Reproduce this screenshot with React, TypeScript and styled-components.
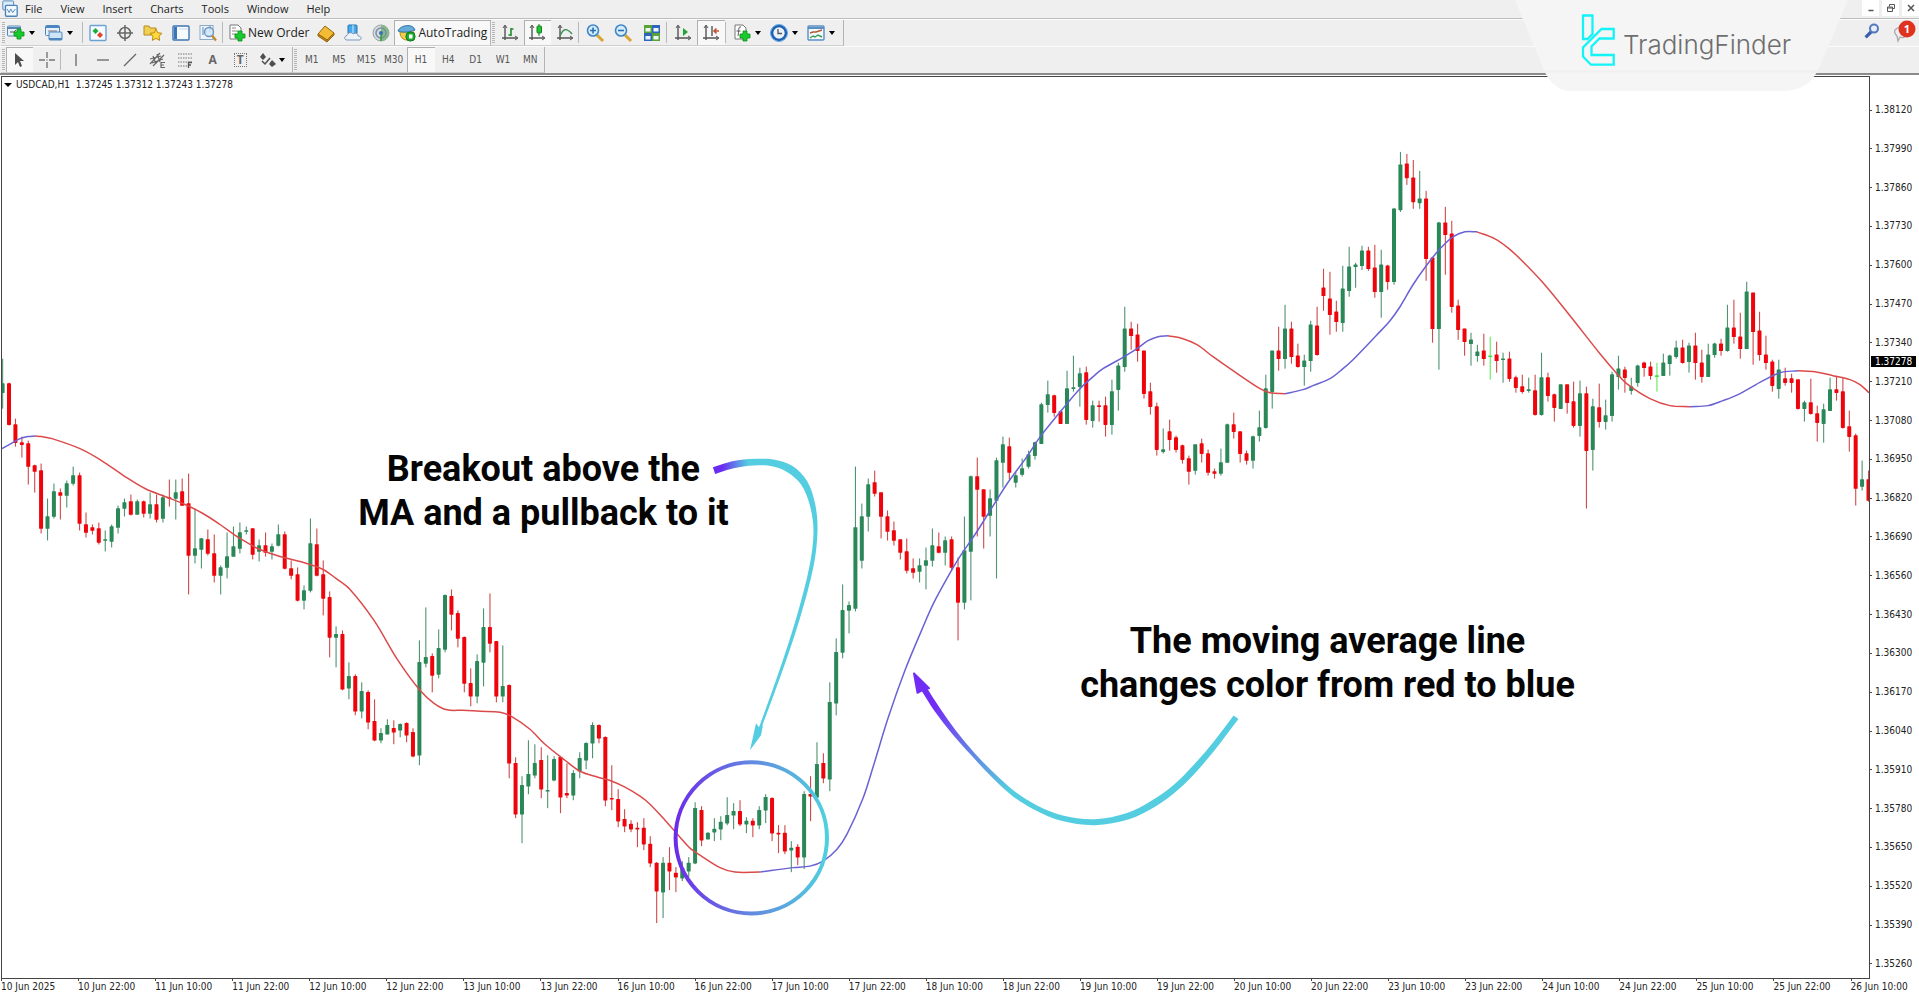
import React from 'react';
import styled, { createGlobalStyle, css } from 'styled-components';

const GlobalStyle = createGlobalStyle`
  * { box-sizing: border-box; }
  html, body { margin: 0; background: #fff; }
  button { font: inherit; color: inherit; background: none; border: 0; padding: 0; margin: 0; }
`;

const UI_FONT = '"Open Sans", "Noto Sans", sans-serif';
const CHART_FONT = '"DejaVu Sans Condensed", "DejaVu Sans", sans-serif';

/* ---------- chart data ---------- */

// One bar per entry: direction (g up, r down, l doji), then high, body top, body bottom and low
const BARS = `
g 357 382 391 407,r 381 382 423 424,r 417 423 441 445,r 435 441 443 456,r 439 442 465 483,r 463 464 470 491,
r 462 469 527 532,g 497 515 527 539,g 482 490 515 517,r 487 491 494 518,g 479 482 494 506,g 465 474 482 484,
r 471 474 522 529,r 511 523 531 536,r 523 526 529 533,r 521 527 541 543,g 529 538 539 550,g 523 525 540 546,
g 504 507 526 532,g 497 501 507 515,r 493 500 513 514,g 498 500 513 513,r 499 500 512 516,g 491 503 512 517,
r 493 503 518 521,g 493 496 517 521,r 478 496 497 505,g 478 491 497 518,r 477 490 504 504,r 472 502 554 593,
g 507 547 554 562,g 537 537 548 567,r 528 538 552 554,r 533 552 574 581,g 564 566 574 593,g 531 555 566 577,
g 525 545 555 555,g 521 531 547 552,g 525 529 530 533,r 527 527 553 558,g 538 544 550 560,r 531 544 551 555,
g 542 545 550 558,g 523 533 544 545,r 530 533 567 568,r 559 567 574 578,r 566 573 599 600,g 584 589 599 608,
g 517 542 589 591,r 527 543 574 575,r 559 573 597 614,r 590 596 636 656,g 625 633 636 666,r 629 633 688 689,
g 661 675 687 698,r 673 675 710 714,g 681 690 710 717,r 689 691 721 728,r 698 720 739 740,g 727 732 739 742,
g 718 724 733 733,r 719 727 731 743,g 722 723 729 736,r 721 722 734 741,r 727 731 755 756,g 639 661 754 764,
g 606 656 662 666,r 652 655 674 691,g 628 647 673 677,g 593 594 648 651,r 588 595 613 629,r 609 612 637 646,
r 635 636 682 691,r 667 682 695 705,g 653 660 695 702,g 607 626 661 685,r 592 626 642 651,r 640 640 695 701,
g 644 685 695 701,r 683 684 762 777,r 756 762 813 817,g 775 784 813 842,g 739 773 785 793,g 743 762 774 777,
r 746 759 788 797,g 754 789 790 807,g 755 758 779 780,r 755 756 796 812,r 762 792 794 797,g 769 772 794 799,
g 751 757 770 777,g 741 742 759 768,g 721 724 742 757,r 723 724 737 742,r 735 736 799 805,r 764 797 798 809,
r 788 798 820 826,r 808 818 825 831,r 819 823 828 831,r 821 827 828 846,r 817 827 843 849,r 835 843 862 866,
r 861 862 890 922,g 856 862 891 917,r 846 862 870 889,r 866 872 876 891,g 860 867 877 880,g 856 862 870 876,
g 801 807 862 863,r 805 809 839 845,g 831 832 838 838,g 817 828 831 840,g 815 821 828 839,g 796 814 822 824,
g 802 810 814 828,r 799 810 823 825,g 816 820 823 832,r 817 820 824 836,g 805 809 824 828,g 793 796 809 822,
r 796 797 832 840,r 824 832 833 852,r 824 832 850 853,g 840 847 849 871,r 843 846 856 864,g 790 793 856 868,
r 775 793 795 820,g 741 763 796 797,r 752 762 777 782,g 681 701 778 790,g 637 651 702 714,g 583 609 651 657,
g 600 604 609 632,g 465 526 607 610,g 502 515 559 567,g 477 483 515 530,r 469 481 492 495,r 491 491 515 537,
r 509 515 530 539,r 520 529 539 544,r 538 538 551 558,r 537 550 569 572,r 557 567 571 577,g 557 564 570 581,
g 546 559 564 588,g 527 544 559 565,r 531 545 551 552,g 535 539 551 564,r 535 538 566 569,r 556 566 601 639,
g 515 549 601 608,g 474 475 550 599,r 456 475 488 535,r 488 488 515 547,g 488 497 514 535,g 456 459 499 577,
g 435 443 461 486,r 436 445 471 478,g 470 474 481 486,g 457 467 473 475,g 449 453 465 467,g 440 441 454 458,
g 401 403 442 442,g 379 393 403 411,r 393 394 411 415,r 409 410 422 422,g 369 387 422 422,g 354 386 387 390,
g 366 372 385 405,r 365 371 418 423,g 399 404 419 426,r 399 404 405 420,r 395 404 423 435,g 378 390 423 433,
g 361 364 388 409,g 305 327 365 370,r 320 327 334 348,r 322 333 349 360,r 349 349 392 397,r 381 390 405 413,
r 401 405 448 454,g 427 448 450 452,r 418 430 438 449,r 434 436 448 451,r 443 444 458 462,r 454 457 470 483,
g 443 443 469 473,r 437 442 452 461,r 448 452 471 474,r 467 470 472 477,g 447 461 472 474,g 422 423 461 461,
r 411 423 430 437,r 430 430 452 461,r 449 452 459 463,g 434 435 459 467,g 409 426 434 440,g 373 387 426 427,
g 349 349 390 407,r 325 349 357 369,g 303 327 357 367,r 320 327 355 362,r 342 354 365 366,g 353 359 365 384,
g 319 323 359 370,r 305 324 353 354,r 267 286 294 309,r 270 297 313 333,r 299 310 320 330,g 264 287 321 330,
g 245 265 289 295,g 261 263 265 286,g 244 249 264 268,r 245 249 267 269,r 243 266 290 296,g 248 263 290 316,
r 263 264 280 288,g 206 207 280 283,g 150 163 208 210,r 152 162 176 183,r 158 176 200 207,g 169 197 201 207,
r 189 197 257 279,r 255 256 327 341,g 220 221 327 368,r 205 221 233 273,r 219 232 305 311,r 298 304 328 338,
r 327 327 340 354,g 331 338 342 364,g 343 350 354 360,r 332 349 357 364,l 335 354 355 378,r 340 353 359 371,
g 351 357 358 381,r 350 357 377 380,r 374 376 386 391,r 373 385 390 392,g 376 388 389 391,r 373 389 413 414,
g 351 376 413 414,r 371 376 394 400,r 392 393 406 420,g 383 383 407 407,r 383 383 401 412,r 380 400 424 426,
g 379 392 424 435,r 385 392 449 507,g 397 405 448 469,r 382 406 420 426,g 398 414 420 428,g 370 373 414 420,
g 354 367 375 388,r 365 368 376 391,g 376 385 389 393,g 363 364 381 385,r 360 361 366 375,r 360 365 374 378,
l 361 374 375 390,g 352 361 374 374,g 353 354 362 374,g 339 346 355 357,r 338 346 361 362,g 341 344 360 371,
r 331 344 361 378,r 348 361 375 381,g 342 353 375 375,g 341 342 353 356,r 337 342 349 354,g 303 326 349 350,
r 298 326 335 342,r 311 335 347 357,g 280 290 347 347,r 291 291 330 363,r 310 329 353 359,r 334 353 361 368,
r 358 360 384 390,g 358 368 387 397,r 366 377 381 384,r 372 377 381 391,r 378 378 407 408,g 399 401 407 420,
r 377 401 412 413,r 404 412 421 440,g 402 408 422 441,g 376 388 409 409,r 374 388 391 399,r 376 390 426 427,
r 409 425 435 450,r 432 434 487 504,g 459 478 485 489,r 469 478 499 500`
  .trim()
  .split(/,\s*/)
  .map((row) => {
    const [kind, ...values] = row.split(' ');
    const [high, top, bottom, low] = values.map(Number);
    return { kind, high, top, bottom, low };
  });

const BAR_COLORS: Record<string, string> = { g: '#2a8757', r: '#ee050b', l: '#3fe03f' };
const WICK_COLORS: Record<string, string> = { g: '#4f9470', r: '#cf4a4a', l: '#5fe85f' };
const FIRST_BAR = 2.6;
const BAR_STEP = 6.412;

type Point = [number, number];

const AVERAGE: { trend: 'up' | 'down'; points: Point[] }[] = [
  { trend: 'up', points: [[2, 447], [11, 442], [20, 437], [28, 435], [35, 434.5]] },
  { trend: 'down', points: [[35, 434.5], [42, 435], [52, 437], [80, 447], [100, 458], [125, 475], [145, 487], [165, 495], [185, 503], [203, 512], [220, 523], [240, 537], [260, 548], [280, 555], [300, 560], [323, 568], [336, 577], [350, 588], [374, 619], [398, 659], [420, 689], [434, 702], [447, 708.5], [463, 709], [480, 710], [500, 711], [513, 716], [530, 728], [545, 743], [565, 759], [580, 770], [598, 776], [612, 780], [625, 786], [640, 795], [650, 803], [665, 819], [680, 836], [690, 847], [700, 854], [720, 866.5], [735, 871], [760, 871]] },
  { trend: 'up', points: [[760, 871], [793, 866.5], [810, 865], [823, 860], [837, 848], [847, 833], [863, 797], [873, 766], [888, 717], [905, 669], [922, 628], [933, 603], [947, 577], [960, 555], [977, 530], [997, 498], [1010, 478], [1027, 455], [1041, 434], [1067, 402], [1080, 387], [1092, 376], [1103, 367], [1120, 357.5], [1137, 347], [1148, 339], [1158, 335], [1168, 334]] },
  { trend: 'down', points: [[1168, 334], [1183, 337], [1197, 343], [1213, 355], [1233, 369], [1260, 387], [1270, 391], [1285, 392]] },
  { trend: 'up', points: [[1285, 392], [1303, 388], [1313, 384], [1330, 377], [1343, 367], [1353, 358], [1377, 333], [1390, 319], [1400, 305], [1413, 283], [1427, 263], [1440, 247], [1453, 235], [1465, 230], [1477, 230]] },
  { trend: 'down', points: [[1477, 230], [1495, 237], [1508, 246], [1520, 257], [1543, 281], [1570, 314], [1600, 352], [1617, 372], [1628, 383], [1650, 397], [1670, 404], [1690, 405]] },
  { trend: 'up', points: [[1690, 405], [1708, 404], [1723, 399], [1738, 393], [1763, 379], [1780, 371], [1798, 369]] },
  { trend: 'down', points: [[1798, 369], [1815, 370], [1833, 374], [1850, 378], [1860, 383], [1869, 391]] },
];

const PRICES = Array.from({ length: 23 }, (_, i) => (1.3812 - i * 0.0013).toFixed(5));
const DAYS = [10, 11, 12, 13, 16, 17, 18, 19, 20, 23, 24, 25];
const DATES = [
  '10 Jun 2025',
  '10 Jun 22:00',
  ...DAYS.slice(1).flatMap((d) => [`${d} Jun 10:00`, `${d} Jun 22:00`]),
  '26 Jun 10:00',
];

/* ---------- curve helpers ---------- */

const distance = (a: Point, b: Point) => Math.hypot(b[0] - a[0], b[1] - a[1]);

// Spline through the points, with tangents weighted by the distance between neighbours
function smoothPath(points: Point[]) {
  const tangents = points.map((_, i): Point => {
    const a = points[Math.max(i - 1, 0)];
    const c = points[Math.min(i + 1, points.length - 1)];
    const span = distance(a, points[i]) + distance(points[i], c) || 1;
    return [(c[0] - a[0]) / span, (c[1] - a[1]) / span];
  });
  let d = `M${points[0][0]} ${points[0][1]}`;
  for (let i = 0; i < points.length - 1; i++) {
    const b = points[i];
    const c = points[i + 1];
    const k = distance(b, c) / 3;
    const [t, u] = [tangents[i], tangents[i + 1]];
    d += `C${b[0] + t[0] * k} ${b[1] + t[1] * k} ${c[0] - u[0] * k} ${c[1] - u[1] * k} ${c[0]} ${c[1]}`;
  }
  return d;
}

// Outline of a brush stroke whose width changes along the way; each knot is x, y, width
function brushPath(knots: [number, number, number][]) {
  const left: Point[] = [];
  const right: Point[] = [];
  knots.forEach(([x, y, w], i) => {
    const [px, py] = knots[Math.max(i - 1, 0)];
    const [nx, ny] = knots[Math.min(i + 1, knots.length - 1)];
    const len = Math.hypot(nx - px, ny - py);
    const ox = (-(ny - py) / len) * (w / 2);
    const oy = ((nx - px) / len) * (w / 2);
    left.push([x + ox, y + oy]);
    right.unshift([x - ox, y - oy]);
  });
  return `${smoothPath(left)}${smoothPath(right).replace('M', 'L')}Z`;
}

const CALLOUT_ARROW = brushPath([[714, 469, 7], [726, 465, 7], [740, 462, 7], [758, 460.5, 6.5], [774, 461.5, 7], [790, 467.5, 8], [804, 481, 7], [812.5, 503, 5.5], [815.5, 530, 4], [811.5, 565, 4], [798, 617, 3.6], [780, 672, 3], [760, 727, 2.4]]);
const SWEEP_ARROW = brushPath([[923, 686, 6], [937, 708, 6], [954, 731, 5], [973, 753, 4], [993, 774, 4.5], [1013, 792, 5], [1035, 806, 5], [1062, 817, 5.5], [1095, 821, 6], [1128, 815, 6.5], [1154, 802, 7], [1176, 786, 6.5], [1196, 766, 6.5], [1217, 741, 6], [1236, 716, 6]]);

/* ---------- layout ---------- */

const Window = styled.div`
  position: relative;
  display: flex;
  flex-direction: column;
  min-height: 100vh;
  overflow: hidden;
  background: #efefef;
  font-family: ${UI_FONT};
  font-size: 12px;
  color: #222;
`;

const MenuBar = styled.header`
  display: flex;
  align-items: flex-start;
  justify-content: space-between;
  height: 19px;
  padding-left: 1px;
  border-bottom: 1px solid #bdbdbd;
`;

const Menu = styled.nav`
  display: flex;
  align-items: center;
  gap: 18px;
  font-size: 11px;
  line-height: 16px;
  svg { margin-right: -12px; }
`;

const Controls = styled.div`
  display: flex;
  gap: 3px;
`;

const ControlButton = styled.button`
  display: grid;
  place-items: center;
  width: 17px;
  height: 16px;
  background: #fff;
`;

const Toolbar = styled.div`
  display: flex;
  align-items: stretch;
  height: 27px;
  padding-left: 1px;
  border-top: 1px solid #fbfbfb;
`;

const Strip = styled.div`
  display: flex;
  align-items: stretch;
  border-right: 1px solid #b4b4b4;
  border-bottom: 1px solid #cfcfcf;
`;

const Group = styled.div<{ $width: number; $count: number; $lead?: number }>`
  display: grid;
  grid-template-columns: repeat(${(p) => p.$count}, 1fr);
  width: ${(p) => p.$width}px;
  padding-left: ${(p) => p.$lead ?? 0}px;
`;

const Grip = styled.span`
  width: 3px;
  margin: 2px 1px;
  background: repeating-linear-gradient(#b5b5b5 0 1px, #efefef 1px 2px);
`;

const Divider = styled.span`
  width: 1px;
  margin: 2px 1px 2px 0;
  background: #b9b9b9;
`;

const pressed = css`
  background: #f8f8f8;
  box-shadow: inset 1px 1px 0 #b0b0b0;
`;

const ToolButton = styled.button<{ $on?: boolean }>`
  display: flex;
  align-items: center;
  justify-content: center;
  ${(p) => p.$on && pressed}
`;

const DropButton = styled.button`
  display: flex;
  align-items: center;
  gap: 3px;
  &::after {
    content: '';
    border: 3px solid transparent;
    border-top: 4px solid #000;
    border-bottom: 0;
  }
`;

const TextButton = styled.button<{ $on?: boolean }>`
  display: flex;
  align-items: center;
  gap: 1px;
  padding: 0 3px;
  white-space: nowrap;
  ${(p) => p.$on && pressed}
`;

const PeriodButton = styled(ToolButton)`
  font-family: ${CHART_FONT};
  font-size: 10px;
  color: #555;
`;

const StatusIcons = styled.div`
  display: flex;
  align-items: center;
  gap: 12px;
  margin-left: auto;
  padding-right: 3px;
`;

const BrandTab = styled.div`
  position: absolute;
  top: 0;
  right: 71px;
  width: 333px;
  height: 91px;
  z-index: 2;
`;

const BrandShape = styled.svg`
  display: block;
`;

const BrandName = styled.span`
  position: absolute;
  left: 108px;
  top: 30px;
  font: 300 26px/30px Inter, sans-serif;
  color: #6e6e6e;
`;

const Chart = styled.main`
  position: relative;
  flex: 1;
  display: grid;
  grid-template-columns: 1fr 49px;
  grid-template-rows: 1fr 17px;
  min-height: 480px;
  border-top: 2px solid #8b8b8b;
  padding: 1px 0 0 1px;
  background: #fff;
  font-family: ${CHART_FONT};
  font-size: 10px;
  line-height: 12px;
  color: #222;
`;

const Plot = styled.section`
  position: relative;
  border: 1px solid #444;
`;

const PlotArea = styled.svg`
  position: absolute;
  inset: 0;
  width: 100%;
  height: 100%;
`;

const Quote = styled.div`
  position: relative;
  display: flex;
  align-items: center;
  gap: 4px;
  padding: 2px 0 0 2px;
  white-space: pre;
  &::before {
    content: '';
    border: 4px solid transparent;
    border-top: 4px solid #000;
    border-bottom: 0;
  }
`;

const Note = styled.p<{ $x: string; $y: string }>`
  position: absolute;
  left: ${(p) => p.$x};
  top: ${(p) => p.$y};
  transform: translate(-50%, -50%);
  margin: 0;
  font: 700 36px/44px Roboto, sans-serif;
  color: #050505;
  text-align: center;
  white-space: nowrap;
`;

const PriceAxis = styled.aside`
  position: relative;
  display: flex;
  flex-direction: column;
  justify-content: space-between;
  padding: 28px 0 9px;
`;

const Price = styled.span`
  display: flex;
  align-items: center;
  gap: 3px;
  &::before {
    content: '';
    width: 2px;
    height: 1px;
    background: #444;
  }
`;

const LastPrice = styled.strong`
  position: absolute;
  left: 1px;
  top: 31%;
  width: 45px;
  padding-left: 4px;
  line-height: 11px;
  font-weight: 400;
  background: #000;
  color: #fff;
`;

const DateAxis = styled.footer`
  display: flex;
`;

const DateLabel = styled.span`
  flex: 0 0 calc(100% * 12 / 291);
  white-space: nowrap;
  &::before {
    content: '';
    display: block;
    width: 1px;
    height: 2px;
    background: #444;
  }
`;

/* ---------- icons ---------- */

const Icon = ({ children, size = 20 }: { children: React.ReactNode; size?: number }) => (
  <svg width={size} height={size} viewBox="0 0 20 20" fill="none" aria-hidden="true">
    {children}
  </svg>
);

const Plus = ({ x, y }: { x: number; y: number }) => (
  <path transform={`translate(${x} ${y})`} d="M3 0h4v3h3v4H7v3H3V7H0V3h3z" fill="#16cc2c" stroke="#0c8a18" strokeWidth=".8" />
);

const Axes = () => (
  <g stroke="#555" strokeWidth="1.4">
    <path d="M5 3v14M2 15h15" />
    <path d="M3 5l2-3 2 3M15 13l3 2-3 2" strokeWidth="1" />
  </g>
);

const icons = {
  app: <g stroke="#4b82b8"><rect x="2" y="1" width="12" height="10" rx="1" fill="#dcebf8" /><rect x="5" y="6" width="13" height="12" rx="1" fill="#f2f8ff" strokeWidth="1.5" /><path d="M7 10l2 4 2-4 2 4 3-4" /></g>,
  newChart: <g><rect x="1.500" y="3" width="13" height="10" rx="1" fill="#e6f1fb" stroke="#5588b5" /><path d="M2 5h12" stroke="#5588b5" strokeWidth="2" /><path d="M4 9h4l2-2" stroke="#555" /><Plus x={8} y={6} /></g>,
  profiles: <g stroke="#4c86c0"><rect x="1.500" y="2.500" width="14" height="10" rx="1" fill="#e6f1fb" /><path d="M2 4h13" strokeWidth="2" /><rect x="5" y="9" width="13" height="8" rx="1" fill="#cfe3f6" /><path d="M5 16h13" strokeWidth="2" /><path d="M4 8h9" stroke="#777" /></g>,
  market: <g><rect x="2" y="2.500" width="16" height="15" rx="1" fill="#f6fbff" stroke="#6ba2d4" strokeWidth="1.4" /><path d="M7.500 5l3 3-3 3-3-3z" fill="#1bad35" /><path d="M12 9l3 3-3 3-3-3z" fill="#e2432d" /></g>,
  dataWindow: <g stroke="#666" strokeWidth="1.500"><circle cx="10" cy="10" r="5.500" /><path d="M10 2v16M2 10h16" /></g>,
  favorites: <g><path d="M1 3h5l1 2h6v7H1z" fill="#f0cf52" stroke="#b58b1c" /><path d="M13 6l1.800 3.800 4.200.500-3 2.900.700 4.200-3.700-2-3.700 2 .700-4.200-3-2.900 4.200-.500z" fill="#ffd93b" stroke="#bf8a12" /></g>,
  navigator: <g><rect x="2" y="3" width="16" height="14" rx="1" fill="#f7fbff" stroke="#3d76b4" strokeWidth="1.400" /><rect x="3" y="4" width="3" height="12" fill="#3d76b4" /><path d="M8 6h9" stroke="#c5daee" /></g>,
  tester: <g><rect x="2" y="2.500" width="13" height="14" fill="#eef5fc" stroke="#89a9c9" /><path d="M5 4v8M8 5v5M12 3v6" stroke="#5b86b4" /><circle cx="11" cy="9" r="4.500" fill="#cfe6fa" fillOpacity=".8" stroke="#6b93bd" strokeWidth="1.300" /><path d="M14 12.500l4 5" stroke="#c08a2e" strokeWidth="2.400" /></g>,
  order: <g><path d="M3 2h8l3 3v11H3z" fill="#fff" stroke="#777" /><path d="M5 5h4M5 8h6M5 11h4" stroke="#888" /><Plus x={8} y={8} /></g>,
  gold: <g stroke="#94660f"><path d="M2 11l7-8 9 7-7 7z" fill="#f3bb36" /><path d="M2 11v2l9 6v-2zM11 17l7-7v2l-7 7" fill="#c98a1a" /></g>,
  cloud: <g><rect x="5" y="2" width="9" height="9" rx="1" fill="#45a8e8" stroke="#2473b4" /><path d="M10 2v9" stroke="#d7eefc" /><path d="M4 17c-3 0-3-4 0-4.500C5 9 9 9 10 11c3-2 5 0 5 2 4 0 4 4 1 4z" fill="#eef3f9" stroke="#7c97b5" /></g>,
  signal: <g><circle cx="10" cy="10" r="8" fill="#d5dadd" stroke="#9aa3a8" /><path d="M10 2a8 8 0 010 16z" fill="#82bb85" /><circle cx="10" cy="10" r="5" stroke="#7c8fa8" strokeWidth="1.500" /><circle cx="10" cy="10" r="2" fill="#3b6cb4" /><path d="M10 12v6" stroke="#2f9a3a" strokeWidth="1.500" /></g>,
  auto: <g><path d="M3 9c0 5 3 8 7 8s7-3 7-8z" fill="#f1cf4a" stroke="#b08a1c" /><path d="M1 8c2-6 15-8 17-1-5 2-11 3-17 1z" fill="#64acd9" stroke="#3476a6" /><rect x="9" y="9" width="9" height="9" rx="4" fill="#20a82f" stroke="#117a1c" /><path d="M12 11.500h3.500v4H12z" fill="#fff" /></g>,
  barChart: <g><Axes /><path d="M11 5v8M11 6h2.500M8.500 12H11" stroke="#1f8f2d" strokeWidth="1.600" /></g>,
  candleChart: <g><Axes /><path d="M12 1v12" stroke="#15801f" /><rect x="10" y="3" width="4.500" height="7" rx="1" fill="#1fc52f" stroke="#15801f" /></g>,
  lineChart: <g><Axes /><path d="M5 13c3-7 6-9 12-2" stroke="#3a8d55" strokeWidth="1.400" /></g>,
  zoomIn: <g><path d="M12 12l6 6" stroke="#d9a52e" strokeWidth="3" /><circle cx="8" cy="7.500" r="5.500" fill="#d6ecfb" stroke="#3f86c8" strokeWidth="1.600" /><path d="M5 7.500h6M8 4.500v6" stroke="#2b6fb3" strokeWidth="1.600" /></g>,
  zoomOut: <g><path d="M12 12l6 6" stroke="#d9a52e" strokeWidth="3" /><circle cx="8" cy="7.500" r="5.500" fill="#d6ecfb" stroke="#3f86c8" strokeWidth="1.600" /><path d="M5 7.500h6" stroke="#2b6fb3" strokeWidth="1.600" /></g>,
  tile: <g><rect x="2" y="2" width="8" height="8" fill="#57a436" /><rect x="10" y="2" width="8" height="8" fill="#2e63bd" /><rect x="2" y="10" width="8" height="8" fill="#2e63bd" /><rect x="10" y="10" width="8" height="8" fill="#57a436" /><path d="M3.500 5h5v3.500h-5zM11.500 5h5v3.500h-5zM3.500 13h5v3.500h-5zM11.500 13h5v3.500h-5z" fill="#edf5fb" /></g>,
  scroll: <g><Axes /><path d="M10 5l5 4-5 4z" fill="#22a534" /></g>,
  shift: <g><Axes /><path d="M11 3v10" stroke="#555" strokeWidth="1.400" /><path d="M18 8h-5M15.500 5.500L13 8l2.500 2.500" stroke="#c4522d" strokeWidth="1.600" /></g>,
  indicator: <g><path d="M3 2h8l3 3v11H3z" fill="#fff" stroke="#777" /><path d="M9 4c-3-1-2 4-3 9M4.500 8h4" stroke="#555" /><Plus x={8} y={8} /></g>,
  clock: <g><circle cx="10" cy="10" r="7" fill="#e9f3fc" stroke="#1d5fb0" strokeWidth="2.600" /><circle cx="10" cy="10" r="8.500" stroke="#5ca4e6" /><path d="M9 6v4.500h4" stroke="#555" strokeWidth="1.300" /></g>,
  template: <g><rect x="2" y="3" width="16" height="14" rx="1" fill="#f2f8fe" stroke="#5a8fc4" strokeWidth="1.400" /><path d="M2 5h16" stroke="#5a8fc4" strokeWidth="2" /><path d="M4 10l3-1 3 0 6-2" stroke="#b05a32" strokeWidth="1.400" /><path d="M4 15l3-2 2 1 3-2 4 2" stroke="#3d9b4c" strokeWidth="1.400" /></g>,
  cursor: <path d="M5 3v12l3-3 2 5 2-1-2-5h4z" fill="#4d4d4d" />,
  cross: <path d="M10 2v6M10 12v6M2 10h6M12 10h6M10 9.500v1" stroke="#777" strokeWidth="1.400" />,
  vertical: <path d="M10 4v12" stroke="#666" strokeWidth="1.300" />,
  horizontal: <path d="M4 10h12" stroke="#666" strokeWidth="1.300" />,
  trend: <path d="M4 16L16 4" stroke="#666" strokeWidth="1.300" />,
  channel: <g stroke="#666" strokeWidth="1.200"><path d="M2 14L12 3M5 16L16 5M2 9l11-3M4 13l11-4M5 6l3 8M9 4l3 8" /><path d="M17 12.500h-4v5h4M13 15h3" /></g>,
  fibo: <g stroke="#777"><path d="M3 4h14M3 8h14M3 12h14M3 16h9" strokeDasharray="1.500 1" /><path d="M17 12.500h-3.500V18M13.500 15H16" stroke="#555" strokeWidth="1.300" /></g>,
  arrows: <g fill="#4d4d4d"><path d="M4 7l3-4 3 4-3 3zM13 14l3-4 4 4-4 3z" /><path d="M6 11l3 3 5-6" stroke="#4d4d4d" strokeWidth="1.500" fill="none" /></g>,
};

const groupA = [['Market Watch', icons.market], ['Data Window', icons.dataWindow], ['Favorites', icons.favorites], ['Navigator', icons.navigator], ['Strategy Tester', icons.tester]] as const;
const groupB = [['MetaEditor', icons.gold], ['Virtual Hosting', icons.cloud], ['Signals', icons.signal]] as const;
const chartTypes = [['Bar Chart', icons.barChart], ['Candlesticks', icons.candleChart], ['Line Chart', icons.lineChart]] as const;
const viewTools = [['Zoom In', icons.zoomIn], ['Zoom Out', icons.zoomOut], ['Tile Windows', icons.tile]] as const;
const scrollTools = [['Auto Scroll', icons.scroll], ['Chart Shift', icons.shift]] as const;
const chartMenus = [['Indicators', icons.indicator], ['Periods', icons.clock], ['Templates', icons.template]] as const;
const pointers = [['Cursor', icons.cursor], ['Crosshair', icons.cross]] as const;
const lineTools = [['Vertical Line', icons.vertical], ['Horizontal Line', icons.horizontal], ['Trendline', icons.trend], ['Equidistant Channel', icons.channel], ['Fibonacci Retracement', icons.fibo]] as const;

type ToolList = readonly (readonly [string, React.ReactElement])[];

const Tools = ({ items, width, active }: { items: ToolList; width: number; active?: string }) => (
  <Group $width={width} $count={items.length}>
    {items.map(([name, icon]) => (
      <ToolButton key={name} aria-label={name} $on={name === active}>
        <Icon>{icon}</Icon>
      </ToolButton>
    ))}
  </Group>
);

const GlyphTool = styled(ToolButton)<{ $boxed?: boolean }>`
  font: 700 12px/12px ${UI_FONT};
  color: #666;
  span {
    padding: 0 2px;
    ${(p) => p.$boxed && 'border: 1px dotted #777;'}
  }
`;

/* ---------- sections ---------- */

const Brand = () => (
  <BrandTab>
    <BrandShape width="333" height="91" viewBox="0 0 333 91" aria-hidden="true">
      <path d="M0 0H333L304 68Q294 91 268 91H55Q37 90 28 68Z" fill="#f5f5f5" />
      <path d="M28 71.500H303" stroke="#f0f0f0" strokeWidth="2" />
      <g fill="none" stroke="#14f4f7" strokeWidth="2.300">
        <path d="M68 15.500H77.500V34L72.500 39H68Z" />
        <path d="M98.700 29H86.500L68 47.500V56.500L76 64.700H98.700V55H76.500V46.500L84.500 38.500H98.700Z" />
      </g>
    </BrandShape>
    <BrandName>TradingFinder</BrandName>
  </BrandTab>
);

const Candles = () => (
  <g>
    {BARS.map((bar, i) => {
      const x = FIRST_BAR + i * BAR_STEP;
      return (
        <g key={i}>
          <rect x={x - 0.5} y={bar.high} width="1.1" height={bar.low - bar.high} fill={WICK_COLORS[bar.kind]} />
          <rect x={x - 2} y={bar.top - 0.3} width="4" height={Math.max(bar.bottom - bar.top + 0.6, 1.5)} rx=".6" fill={BAR_COLORS[bar.kind]} />
        </g>
      );
    })}
  </g>
);

const PriceChart = () => (
  <PlotArea viewBox="2 75 1867 902" preserveAspectRatio="none" role="img" aria-label="USDCAD hourly candles with moving average">
    <defs>
      <linearGradient id="ring" x1="0" x2="1" y1="0" y2="0">
        <stop offset="0" stopColor="#6c2bea" />
        <stop offset=".5" stopColor="#6389e0" />
        <stop offset="1" stopColor="#4fd0de" />
      </linearGradient>
      <linearGradient id="callout" gradientUnits="userSpaceOnUse" x1="722" x2="748" y1="0" y2="0">
        <stop offset="0" stopColor="#6a2bf3" />
        <stop offset="1" stopColor="#54cde0" />
      </linearGradient>
      <linearGradient id="sweep" gradientUnits="userSpaceOnUse" x1="940" x2="1025" y1="700" y2="770">
        <stop offset="0" stopColor="#712df6" />
        <stop offset=".55" stopColor="#6389e4" />
        <stop offset="1" stopColor="#54cde0" />
      </linearGradient>
    </defs>
    <Candles />
    {AVERAGE.map(({ trend, points }) => (
      <path key={points[0][0]} d={smoothPath(points)} fill="none" stroke={trend === 'up' ? '#6962d4' : '#db4a4a'} strokeWidth="1.5" />
    ))}
    <circle cx="751.3" cy="836.7" r="75.700" fill="none" stroke="url(#ring)" strokeWidth="4" />
    <path d={CALLOUT_ARROW} fill="url(#callout)" />
    <path d="M750 749l6-27 3 4 4-2-2 10z" fill="#54cde0" />
    <path d={SWEEP_ARROW} fill="url(#sweep)" />
    <path d="M914 672l3.500 19.500 7-4 4.500-.500z" fill="#712df6" stroke="#712df6" strokeWidth="2" strokeLinejoin="round" />
  </PlotArea>
);

export default function App() {
  return (
    <Window>
      <GlobalStyle />
      <MenuBar>
        <Menu aria-label="Main menu">
          <Icon size={18}>{icons.app}</Icon>
          {['File', 'View', 'Insert', 'Charts', 'Tools', 'Window', 'Help'].map((item) => (
            <button key={item}>{item}</button>
          ))}
        </Menu>
        <Controls>
          <ControlButton aria-label="Minimize"><Icon size={10}><path d="M5 15h10" stroke="#555" strokeWidth="3" /></Icon></ControlButton>
          <ControlButton aria-label="Restore"><Icon size={10}><path d="M7 7V3h10v8h-4M3 8h10v9H3zM3 10h10" stroke="#555" strokeWidth="2" /></Icon></ControlButton>
          <ControlButton aria-label="Close"><Icon size={10}><path d="M4 4l12 12M16 4L4 16" stroke="#555" strokeWidth="3" /></Icon></ControlButton>
        </Controls>
      </MenuBar>

      <Toolbar role="toolbar" aria-label="Standard">
        <Strip>
          <Grip />
          <Group $width={76} $count={2}>
            <DropButton aria-label="New chart"><Icon>{icons.newChart}</Icon></DropButton>
            <DropButton aria-label="Profiles"><Icon>{icons.profiles}</Icon></DropButton>
          </Group>
          <Divider />
          <Tools items={groupA} width={138} />
          <Divider />
          <TextButton><Icon>{icons.order}</Icon>New Order</TextButton>
          <Tools items={groupB} width={82} />
          <TextButton $on><Icon>{icons.auto}</Icon>AutoTrading</TextButton>
        </Strip>
        <Strip>
          <Grip />
          <Tools items={chartTypes} width={82} active="Candlesticks" />
          <Divider />
          <Tools items={viewTools} width={86} />
          <Divider />
          <Tools items={scrollTools} width={57} active="Chart Shift" />
          <Divider />
          <Group $width={116} $count={3} $lead={5}>
            {chartMenus.map(([name, icon]) => (
              <DropButton key={name} aria-label={name}><Icon>{icon}</Icon></DropButton>
            ))}
          </Group>
        </Strip>
        <StatusIcons>
          <button aria-label="Search"><Icon size={16}><path d="M10 10L2 18" stroke="#3a5fae" strokeWidth="4" /><circle cx="12.500" cy="7" r="5" fill="#e6edf8" stroke="#5577bd" strokeWidth="2.500" /></Icon></button>
          <button aria-label="1 notification">
            <svg width="24" height="24" viewBox="0 0 24 24" aria-hidden="true">
              <path d="M3 11c4-5 14-2 12 4-2 4-5 4-7 3l-2 4-1-5c-2-2-3-4-2-6z" fill="#eee" stroke="#aaa" strokeWidth="1.300" />
              <circle cx="15" cy="10" r="8.500" fill="#e0331f" />
              <text x="15" y="14" textAnchor="middle" fontFamily="Open Sans, sans-serif" fontSize="11" fontWeight="700" fill="#fff">1</text>
            </svg>
          </button>
        </StatusIcons>
      </Toolbar>

      <Toolbar role="toolbar" aria-label="Line studies and periods">
        <Strip>
          <Grip />
          <Tools items={pointers} width={54} active="Cursor" />
          <Divider />
          <Tools items={lineTools} width={137} />
          <Group $width={55} $count={2}>
            <GlyphTool aria-label="Text"><span>A</span></GlyphTool>
            <GlyphTool aria-label="Text Label" $boxed><span>T</span></GlyphTool>
          </Group>
          <Group $width={38} $count={1} $lead={2}>
            <DropButton aria-label="Arrows"><Icon>{icons.arrows}</Icon></DropButton>
          </Group>
        </Strip>
        <Strip>
          <Grip />
          <Group $width={246} $count={9}>
            {['M1', 'M5', 'M15', 'M30', 'H1', 'H4', 'D1', 'W1', 'MN'].map((p) => (
              <PeriodButton key={p} $on={p === 'H1'}>{p}</PeriodButton>
            ))}
          </Group>
        </Strip>
      </Toolbar>

      <Brand />

      <Chart>
        <Plot>
          <PriceChart />
          <Quote>{'USDCAD,H1  1.37245 1.37312 1.37243 1.37278'}</Quote>
          <Note $x="29%" $y="46%">Breakout above the<br />MA and a pullback to it</Note>
          <Note $x="71%" $y="65%">The moving average line<br />changes color from red to blue</Note>
        </Plot>
        <PriceAxis>
          {PRICES.map((price) => <Price key={price}>{price}</Price>)}
          <LastPrice>1.37278</LastPrice>
        </PriceAxis>
        <DateAxis>
          {DATES.map((date) => <DateLabel key={date}>{date}</DateLabel>)}
        </DateAxis>
      </Chart>
    </Window>
  );
}
